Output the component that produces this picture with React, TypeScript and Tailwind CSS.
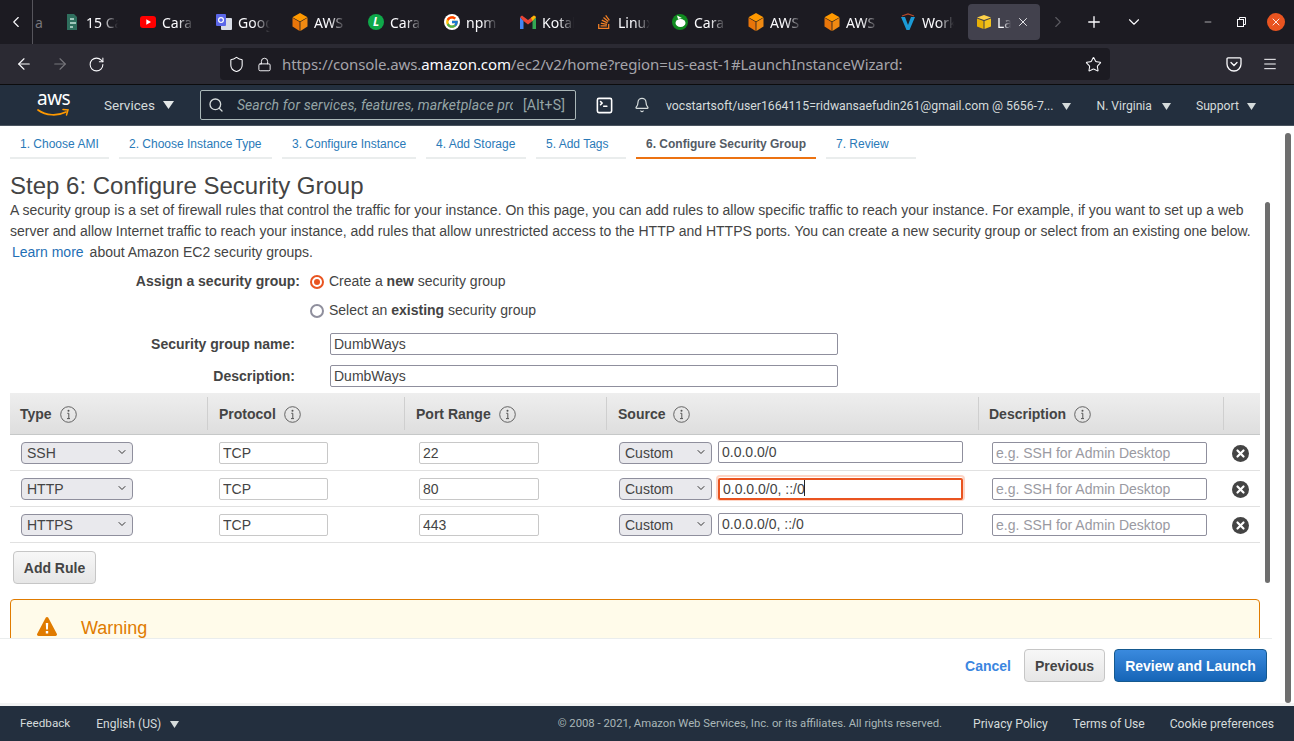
import { ReactNode } from "react"
import {
  ArrowLeft, ArrowRight, Bell, ChevronDown, ChevronLeft, ChevronRight, Lock, Menu, Minus, Plus,
  RotateCw, Search, Shield, SquareTerminal, Star, X,
} from "lucide-react"
import { FcGoogle } from "react-icons/fc"
import { FaStackOverflow } from "react-icons/fa"

const chromeFont = "font-['Noto_Sans',sans-serif]"
const navFont = "font-['Roboto',sans-serif]"

function Cube({ top = "#ff9900", left = "#e8750a", right = "#f08a12" }: { top?: string; left?: string; right?: string }) {
  return (
    <svg width="16" height="18" viewBox="0 0 16 18">
      <path d="M8 0 15.5 4.2 8 8.5.5 4.2Z" fill={top} />
      <path d="M.5 4.8 7.6 9V18L.5 13.6Z" fill={left} />
      <path d="M15.5 4.8 8.4 9V18L15.5 13.6Z" fill={right} />
    </svg>
  )
}

const tabs: { label: string; icon: ReactNode }[] = [
  {
    label: "15 Cards",
    icon: (
      <svg width="16" height="16" viewBox="0 0 16 16">
        <path d="M3 0h7l3 3v13H3Z" fill="#2f6f5e" />
        <path d="M6 4h4v2H6Zm0 4h6v2H6Zm0 4h3v2H6Z" fill="#9fc7bb" />
      </svg>
    ),
  },
  {
    label: "Cara",
    icon: (
      <svg width="16" height="16" viewBox="0 0 16 16">
        <rect y="2" width="16" height="12" rx="3" fill="#f00" />
        <path d="M6.3 5.2v5.6L11 8Z" fill="#fff" />
      </svg>
    ),
  },
  {
    label: "Google",
    icon: (
      <svg width="16" height="16" viewBox="0 0 16 16">
        <rect x="5" y="4" width="11" height="12" rx="1" fill="#d8dce6" />
        <rect width="10" height="12" rx="1" fill="#5b67e8" />
        <circle cx="5" cy="6" r="2.4" fill="none" stroke="#fff" strokeWidth="1.2" />
      </svg>
    ),
  },
  { label: "AWS", icon: <Cube /> },
  {
    label: "Cara",
    icon: (
      <span className="flex h-4 w-4 items-center justify-center rounded-full bg-[#0fa84a] text-[12px] font-bold italic leading-none text-white">L</span>
    ),
  },
  {
    label: "npm",
    icon: (
      <span className="flex h-4 w-4 items-center justify-center rounded-full bg-white"><FcGoogle size={14} /></span>
    ),
  },
  {
    label: "Kotak",
    icon: (
      <svg width="16" height="14" viewBox="0 0 16 14">
        <path d="M0 2v12h3.5V6Z" fill="#4285f4" />
        <path d="M16 2v12h-3.5V6Z" fill="#34a853" />
        <path d="M0 2 2 .5 8 5l6-4.500L16 2l-3.500 4L8 9.500 3.500 6Z" fill="#ea4335" />
        <path d="M12.500 6 16 2l-2-1.500-3 2.200Z" fill="#fbbc04" />
      </svg>
    ),
  },
  { label: "Linux", icon: <FaStackOverflow size={16} className="text-[#f48024]" /> },
  {
    label: "Cara",
    icon: (
      <svg width="16" height="16" viewBox="0 0 16 16">
        <circle cx="8" cy="8" r="8" fill="#0f8a1f" />
        <ellipse cx="8.500" cy="9" rx="5" ry="4" fill="#fff" />
        <path d="M5 1.500 10 4 6 5Z" fill="#fff" />
      </svg>
    ),
  },
  { label: "AWS", icon: <Cube /> },
  { label: "AWS", icon: <Cube /> },
  {
    label: "Work",
    icon: (
      <svg width="16" height="18" viewBox="0 0 16 18">
        <path d="M2 3 8 1l6 2" fill="none" stroke="#b5482a" strokeWidth="1.200" />
        <path d="M1 4h4l3 8 3-8h4L9.500 17h-3Z" fill="#1b9ad6" />
      </svg>
    ),
  },
]

function Caret({ className = "text-[#d5dbdb]", small = false }: { className?: string; small?: boolean }) {
  return (
    <svg width={small ? 9 : 11} height={small ? 7 : 8} viewBox="0 0 11 8" preserveAspectRatio="none" className={`shrink-0 ${className}`}>
      <path d="M0 0h11L5.500 8Z" fill="currentColor" />
    </svg>
  )
}

function InfoIcon() {
  return (
    <svg width="17" height="17" viewBox="0 0 17 17" className="text-[#555]">
      <circle cx="8.500" cy="8.500" r="7.800" fill="none" stroke="currentColor" strokeWidth="0.900" />
      <circle cx="8.500" cy="4.700" r="1" fill="currentColor" />
      <path d="M7.300 7.300h1.500v5M7 12.600h3" fill="none" stroke="currentColor" strokeWidth="1" />
    </svg>
  )
}

function RemoveIcon() {
  return (
    <svg width="17" height="17" viewBox="0 0 17 17">
      <circle cx="8.500" cy="8.500" r="8.500" fill="#444" />
      <path d="M5.500 5.500l6 6m0-6-6 6" stroke="#fff" strokeWidth="2.200" strokeLinecap="round" />
    </svg>
  )
}

function TabStrip() {
  return (
    <div className={`flex h-11 items-stretch bg-[#1c1b22] text-[14px] text-[#fbfbfe] ${chromeFont}`}>
      <div className="flex w-8 shrink-0 items-center justify-center">
        <ChevronLeft size={18} strokeWidth={1.500} />
      </div>
      <div className="flex w-5 shrink-0 items-center overflow-hidden border-l border-[#56555c] pl-[2px] text-[#77767c]">a</div>
      {tabs.map((t, i) => (
        <div key={i} className="ml-1 flex w-[72px] shrink-0 items-center gap-[6px] pl-2">
          <span className="flex w-4 shrink-0 justify-center">{t.icon}</span>
          <span className="w-[32px] overflow-hidden whitespace-nowrap [mask-image:linear-gradient(to_right,black_50%,transparent)]">{t.label}</span>
        </div>
      ))}
      <div className="my-1 ml-1 flex w-[72px] shrink-0 items-center gap-[5px] rounded-[4px] bg-[#42414d] pl-2">
        <svg width="16" height="16" viewBox="0 0 16 16" className="shrink-0">
          <path d="M8 1 15 3.500 8 6 1 3.500Z" fill="#ffd24a" />
          <path d="M1 4.500 7.500 7v8L1 12.500Z" fill="#e8b007" />
          <path d="M15 4.500 8.500 7v8l6.500-2.500Z" fill="#f2c21d" />
        </svg>
        <span className="w-[14px] overflow-hidden whitespace-nowrap [mask-image:linear-gradient(to_right,black_40%,transparent)]">Launch</span>
        <X size={14} strokeWidth={1.500} className="shrink-0" />
      </div>
      <div className="flex w-9 shrink-0 items-center justify-center text-[#5b5a61]">
        <ChevronRight size={18} strokeWidth={1.500} />
      </div>
      <div className="flex w-9 shrink-0 items-center justify-center">
        <Plus size={18} strokeWidth={1.800} />
      </div>
      <div className="ml-1 flex w-9 shrink-0 items-center justify-center">
        <ChevronDown size={18} strokeWidth={1.500} />
      </div>
      <div className="ml-[47px] flex w-[18px] shrink-0 items-center justify-center">
        <Minus size={10} strokeWidth={1.500} />
      </div>
      <div className="ml-[15px] flex w-[18px] shrink-0 items-center justify-center">
        <svg width="10" height="10" viewBox="0 0 10 10" fill="none" stroke="currentColor">
          <rect x="1.500" y="2.500" width="6" height="7" />
          <path d="M3.500 2.500v-2h6v7h-2" />
        </svg>
      </div>
      <div className="ml-[17px] flex shrink-0 items-center">
        <span className="flex h-[18px] w-[18px] items-center justify-center rounded-full bg-[#e95420]">
          <X size={12} strokeWidth={1.800} />
        </span>
      </div>
    </div>
  )
}

function Toolbar() {
  return (
    <div className={`flex h-[41px] items-center border-b border-[#0c0c0d] bg-[#2b2a33] text-[#fbfbfe] ${chromeFont}`}>
      <div className="flex w-12 shrink-0 justify-center"><ArrowLeft size={18} strokeWidth={1.500} /></div>
      <div className="flex w-6 shrink-0 justify-center text-[#77767c]"><ArrowRight size={18} strokeWidth={1.500} /></div>
      <div className="flex w-12 shrink-0 justify-center"><RotateCw size={17} strokeWidth={1.500} /></div>
      <div className="ml-[100px] flex h-8 w-[890px] shrink-0 items-center rounded-[4px] bg-[#1c1b22] px-[8px]">
        <Shield size={17} strokeWidth={1.500} />
        <Lock size={15} strokeWidth={1.500} className="ml-[12px]" />
        <span className="ml-[10px] whitespace-nowrap text-[15px] tracking-[-0.1px] text-[#a5a4aa]">
          https://console.aws.<span className="text-[#fbfbfe]">amazon.com</span>/ec2/v2/home?region=us-east-1#LaunchInstanceWizard:
        </span>
        <Star size={17} strokeWidth={1.500} className="ml-auto" />
      </div>
      <div className="ml-[116px] flex w-4 shrink-0 justify-center">
        <svg width="16" height="16" viewBox="0 0 16 16" fill="none" stroke="currentColor" strokeWidth="1.300">
          <path d="M2 1.800h12a1 1 0 0 1 1 1V8a7 7 0 0 1-14 0V2.800a1 1 0 0 1 1-1Z" />
          <path d="M5 6.500 8 9.500l3-3" strokeLinecap="round" />
        </svg>
      </div>
      <div className="ml-5 flex w-4 shrink-0 justify-center"><Menu size={16} strokeWidth={1.500} /></div>
    </div>
  )
}

function AwsNav() {
  return (
    <div className={`flex h-[41px] items-center border-b border-[#4b5560] bg-[#232f3e] text-[#d5dbdb] ${navFont}`}>
      <div className="relative ml-[37px] h-10 w-[33px] shrink-0 text-white">
        <span className={`absolute left-0 top-[3px] text-[19px] leading-[20px] tracking-[-0.5px] ${chromeFont}`}>aws</span>
        <svg width="33" height="10" viewBox="0 0 33 10" className="absolute left-0 top-[23px]">
          <path d="M1 2c8 6 20 6 28 2" fill="none" stroke="#f90" strokeWidth="1.700" strokeLinecap="round" />
          <path d="M26 1.500l5 .5-1.500 5" fill="none" stroke="#f90" strokeWidth="1.500" strokeLinecap="round" />
        </svg>
      </div>
      <span className="ml-[34px] text-[13.500px]">Services</span>
      <Caret className="ml-[8px] text-[#e4e8e8]" />
      <div className="ml-[26px] flex h-[30px] w-[376px] shrink-0 items-center rounded-[2px] border border-[#aab7b8] bg-[#1b2330] pl-[7px] text-[14px]">
        <Search size={16} strokeWidth={2} className="shrink-0" />
        <span className="ml-[13px] w-[276px] shrink-0 overflow-hidden whitespace-nowrap italic tracking-[0.1px] text-[#95a5a6]">Search for services, features, marketplace products</span>
        <span className="ml-[10px] whitespace-nowrap tracking-[0.2px] text-[#95a5a6]">[Alt+S]</span>
      </div>
      <SquareTerminal size={19} strokeWidth={2} className="ml-[19px] shrink-0 text-white" />
      <Bell size={16} strokeWidth={1.800} className="ml-[20px] shrink-0" />
      <span className="ml-[16px] mt-[2px] whitespace-nowrap text-[12.250px]">vocstartsoft/user1664115=ridwansaefudin261@gmail.com @ 5656-7...</span>
      <Caret small className="ml-[8px] mt-[2px]" />
      <span className="ml-[26px] mt-[2px] whitespace-nowrap text-[12.100px]">N. Virginia</span>
      <Caret small className="ml-[10px] mt-[2px]" />
      <span className="ml-[25px] mt-[2px] text-[12.200px]">Support</span>
      <Caret small className="ml-[8px] mt-[2px]" />
    </div>
  )
}

const steps = [
  { label: "1. Choose AMI", width: "w-[99px]" },
  { label: "2. Choose Instance Type", width: "w-[153px]" },
  { label: "3. Configure Instance", width: "w-[134px]" },
  { label: "4. Add Storage", width: "w-[100px]" },
  { label: "5. Add Tags", width: "w-[90px]" },
  { label: "6. Configure Security Group", width: "w-[180px]", active: true },
  { label: "7. Review", width: "w-[90px]" },
]

function StepTabs() {
  return (
    <div className="flex h-[33px] gap-[10px] pl-[10px]">
      {steps.map(s => (
        <div
          key={s.label}
          className={`h-full whitespace-nowrap border-b-2 pl-[10px] pt-[10px] text-[12px] leading-[16px] ${s.width} ${s.active ? "border-[#ec7211] font-bold text-[#545b64]" : "border-[#eaeded] text-[#2a7ab8]"}`}
        >
          {s.label}
        </div>
      ))}
    </div>
  )
}

const inputClass = "h-[22px] rounded-[2px] border border-[#8f8f9d] bg-white px-[3px] text-[14px] text-[#444] placeholder:text-[#9a9aa2] outline-none"

function SelectBox({ value, options, width }: { value: string; options: string[]; width: string }) {
  return (
    <div className={`relative h-[22px] shrink-0 ${width}`}>
      <select
        defaultValue={value}
        className="h-full w-full appearance-none rounded-[4px] border border-[#8f8f9d] bg-[#e9e9ed] pl-[5px] text-[14px] text-[#444] outline-none"
      >
        {options.map(o => <option key={o}>{o}</option>)}
      </select>
      <ChevronDown size={12} strokeWidth={2} className="pointer-events-none absolute right-[5px] top-[5px] text-[#333]" />
    </div>
  )
}

const tableCols = "grid grid-cols-[198px_197px_202px_372px_245px_36px]"

const headers = ["Type", "Protocol", "Port Range", "Source", "Description"]

const rules = [
  { type: "SSH", port: "22", source: "0.0.0.0/0" },
  { type: "HTTP", port: "80", source: "0.0.0.0/0, ::/0", focused: true },
  { type: "HTTPS", port: "443", source: "0.0.0.0/0, ::/0" },
]

function RulesTable() {
  return (
    <div className="w-[1250px]">
      <div className={`${tableCols} h-[42px] border-b border-[#c6c8c8] bg-gradient-to-b from-[#eeeeee] to-[#dedede]`}>
        {headers.map((h, i) => (
          <div
            key={h}
            className={`my-[4px] flex items-center gap-[8px] border-r border-[#cfcfcf] pt-[2px] text-[14px] font-bold text-[#444] ${i === 0 || i === 4 ? "pl-[10px]" : "pl-[11px]"}`}
          >
            {h}
            <InfoIcon />
          </div>
        ))}
        <div />
      </div>
      {rules.map(r => (
        <div key={r.type} className={`${tableCols} h-[36px] border-b border-[#e1e1e1] pt-[6px]`}>
          <div className="pl-[11px]">
            <SelectBox value={r.type} options={[r.type]} width="w-[112px]" />
          </div>
          <div className="pl-[11px]">
            <input readOnly defaultValue="TCP" className={`${inputClass} w-[109px] border-[#c8c8c8]`} />
          </div>
          <div className="pl-[14px]">
            <input readOnly defaultValue={r.port} className={`${inputClass} w-[120px] border-[#c8c8c8]`} />
          </div>
          <div className="flex gap-[6px] pl-[12px]">
            <SelectBox value="Custom" options={["Custom"]} width="w-[93px]" />
            {r.focused ? (
              <div className="relative h-[22px] w-[245px] rounded-[2px] shadow-[0_0_0_2px_#fdd5c6]">
                <input readOnly defaultValue={r.source} className={`${inputClass} w-full border-2 border-[#e95420] px-[2px]`} />
                <span className="absolute left-[86px] top-[3px] h-[16px] w-px bg-[#222]" />
              </div>
            ) : (
              <input readOnly defaultValue={r.source} className={`${inputClass} w-[245px]`} />
            )}
          </div>
          <div className="pl-[13px]">
            <input readOnly placeholder="e.g. SSH for Admin Desktop" className={`${inputClass} w-[215px]`} />
          </div>
          <div className="mt-px flex h-[22px] items-center pl-[8px]">
            <RemoveIcon />
          </div>
        </div>
      ))}
    </div>
  )
}

function Content() {
  return (
    <div className="h-[479px] overflow-hidden pl-[10px] pr-[12px] pt-[13px]">
      <h1 className="text-[24px] leading-[28px] text-[#444]">Step 6: Configure Security Group</h1>
      <p className="whitespace-nowrap text-[14px] leading-[21px] text-[#444]">
        A security group is a set of firewall rules that control the traffic for your instance. On this page, you can add rules to allow specific traffic to reach your instance. For example, if you want to set up a web
        <br />
        server and allow Internet traffic to reach your instance, add rules that allow unrestricted access to the HTTP and HTTPS ports. You can create a new security group or select from an existing one below.
        <br />
        <span className="ml-[2px] text-[#1f6fb5]">Learn more</span>
        <span className="ml-[6px]">about Amazon EC2 security groups.</span>
      </p>

      <div className="mt-[4px] flex h-[29px] items-center text-[14px] text-[#444]">
        <span className="w-[290px] text-right font-bold">Assign a security group:</span>
        <span className="ml-[10px] flex h-[14px] w-[14px] items-center justify-center rounded-full border-2 border-[#e95420] bg-white">
          <span className="h-[6px] w-[6px] rounded-full bg-[#e95420]" />
        </span>
        <span className="ml-[5px]">Create a <b>new</b> security group</span>
      </div>
      <div className="flex h-[29px] items-center text-[14px] text-[#444]">
        <span className="ml-[300px] h-[14px] w-[14px] rounded-full border-2 border-[#8f8f9d] bg-white" />
        <span className="ml-[5px]">Select an <b>existing</b> security group</span>
      </div>

      <div className="mt-[8px] flex h-[22px] items-center text-[14px] text-[#444]">
        <span className="w-[285px] text-right font-bold">Security group name:</span>
        <input readOnly defaultValue="DumbWays" className={`${inputClass} ml-[35px] w-[508px]`} />
      </div>
      <div className="mt-[10px] flex h-[22px] items-center text-[14px] text-[#444]">
        <span className="w-[285px] text-right font-bold">Description:</span>
        <input readOnly defaultValue="DumbWays" className={`${inputClass} ml-[35px] w-[508px]`} />
      </div>

      <div className="mt-[6px]">
        <RulesTable />
      </div>

      <button className="ml-[3px] mt-[8px] block h-[33px] w-[83px] rounded-[4px] border border-[#c6c6c6] bg-gradient-to-b from-[#f7f7f7] to-[#e6e6e6] pt-px text-[14px] font-bold text-[#444]">
        Add Rule
      </button>

      <div className="mt-[15px] flex h-[60px] w-[1250px] items-start rounded-t-[4px] border border-[#e07b00] bg-[#fffbea] pl-[26px] pt-[17px]">
        <svg width="20" height="19" viewBox="0 0 20 19" className="shrink-0">
          <path d="M10 0c.6 0 1 .3 1.300.8l8.500 16c.5 1-.1 2.200-1.300 2.200h-17C.300 19-.300 17.800.200 16.800l8.500-16C9 .300 9.400 0 10 0Z" fill="#e07b00" />
          <path d="M8.800 6h2.400l-.3 6.500H9.100ZM8.800 14h2.400v2.400H8.800Z" fill="#fff" />
        </svg>
        <span className="ml-[24px] text-[18px] leading-[22px] text-[#e07b00]">Warning</span>
      </div>
    </div>
  )
}

function ActionBar() {
  return (
    <div className="flex h-[65px] items-start justify-end gap-[9px] border-t border-[#eaeded] pr-[5px] pt-[10px] text-[14px] font-bold">
      <span className="mr-[4px] mt-[7px] text-[#3b86e0]">Cancel</span>
      <button className="h-[33px] w-[81px] rounded-[4px] border border-[#c6c6c6] bg-gradient-to-b from-[#f7f7f7] to-[#e6e6e6] pt-px text-[#444]">
        Previous
      </button>
      <button className="h-[33px] w-[153px] rounded-[4px] border border-[#15598f] bg-gradient-to-b from-[#3a8ade] to-[#1565b7] pt-px text-white">
        Review and Launch
      </button>
    </div>
  )
}

function Footer() {
  return (
    <div className={`flex h-[35px] items-center bg-[#232f3e] pl-[20px] pt-px text-[12px] text-[#d5dbdb] ${navFont}`}>
      <span className="text-[11.700px]">Feedback</span>
      <span className="ml-[26px]">English (US)</span>
      <Caret small className="ml-[9px]" />
      <span className="ml-auto text-[11.300px] text-[#aab7b8]">© 2008 - 2021, Amazon Web Services, Inc. or its affiliates. All rights reserved.</span>
      <span className="ml-[31px] text-[12.150px]">Privacy Policy</span>
      <span className="ml-[25px] text-[12.150px]">Terms of Use</span>
      <span className="ml-[25px] mr-[20px] text-[12.150px]">Cookie preferences</span>
    </div>
  )
}

export default function App() {
  return (
    <div className="flex h-screen w-full flex-col overflow-hidden bg-white font-['Liberation_Sans',sans-serif]">
      <TabStrip />
      <Toolbar />
      <AwsNav />
      <div className="relative min-h-0 flex-1">
        <div className="w-[1272px]">
          <StepTabs />
          <Content />
          <ActionBar />
        </div>
        <div className="absolute bottom-0 left-0 h-[3px] w-full bg-[#f2f3f3]" />
        {/* scrollbars sit over the page */}
        <div className="absolute left-[1265px] top-[76px] h-[381px] w-[5px] rounded-full bg-[#6e6e6e]" />
        <div className="absolute left-[1285px] top-[7px] h-[570px] w-[6px] rounded-full bg-[#6e6e6e]" />
      </div>
      <Footer />
    </div>
  )
}
